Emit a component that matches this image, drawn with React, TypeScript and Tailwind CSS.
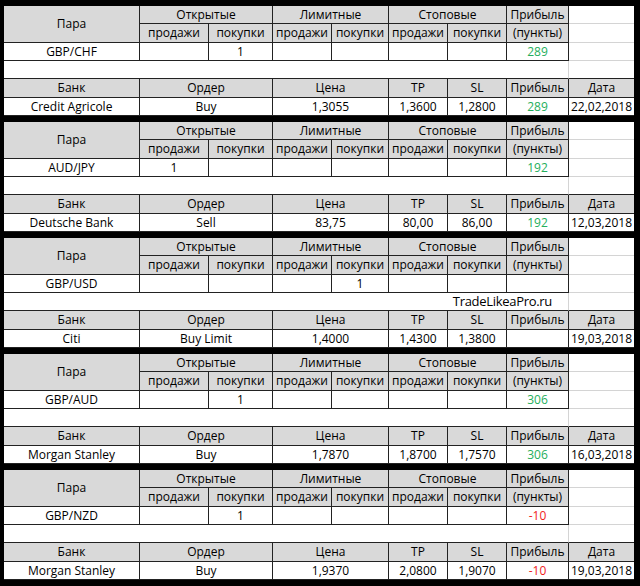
import type { ReactNode } from 'react'

type Block = {
  pair: string
  open: [string, string]
  limit: [string, string]
  stop: [string, string]
  profit: string
  bank: string
  order: string
  price: string
  tp: string
  sl: string
  date: string
  loss?: boolean
  mark?: boolean
}

const blocks: Block[] = [
  {
    pair: 'GBP/CHF',
    open: ['', '1'],
    limit: ['', ''],
    stop: ['', ''],
    profit: '289',
    bank: 'Credit Agricole',
    order: 'Buy',
    price: '1,3055',
    tp: '1,3600',
    sl: '1,2800',
    date: '22,02,2018',
  },
  {
    pair: 'AUD/JPY',
    open: ['1', ''],
    limit: ['', ''],
    stop: ['', ''],
    profit: '192',
    bank: 'Deutsche Bank',
    order: 'Sell',
    price: '83,75',
    tp: '80,00',
    sl: '86,00',
    date: '12,03,2018',
  },
  {
    pair: 'GBP/USD',
    open: ['', ''],
    limit: ['', '1'],
    stop: ['', ''],
    profit: '',
    bank: 'Citi',
    order: 'Buy Limit',
    price: '1,4000',
    tp: '1,4300',
    sl: '1,3800',
    date: '19,03,2018',
    mark: true,
  },
  {
    pair: 'GBP/AUD',
    open: ['', '1'],
    limit: ['', ''],
    stop: ['', ''],
    profit: '306',
    bank: 'Morgan Stanley',
    order: 'Buy',
    price: '1,7870',
    tp: '1,8700',
    sl: '1,7570',
    date: '16,03,2018',
  },
  {
    pair: 'GBP/NZD',
    open: ['', '1'],
    limit: ['', ''],
    stop: ['', ''],
    profit: '-10',
    bank: 'Morgan Stanley',
    order: 'Buy',
    price: '1,9370',
    tp: '2,0800',
    sl: '1,9070',
    date: '19,03,2018',
    loss: true,
  },
]

const Cell = ({
  children,
  className = '',
  head = false,
}: {
  children?: ReactNode
  className?: string
  head?: boolean
}) => (
  <div
    className={`flex items-center justify-center border-r border-b border-[#222] whitespace-nowrap ${
      head ? 'bg-[#d9d9d9]' : 'bg-white'
    } ${className}`}
  >
    {children}
  </div>
)

// empty excel cell to the right of the pair table
const Grid = () => (
  <div className="border-b border-[#d4d4d4] bg-white" />
)

const Table = ({ b }: { b: Block }) => {
  const profitColor = b.loss ? 'text-[#f01c1c]' : 'text-[#25ae5c]'

  return (
    <div className="grid grid-cols-[136px_69px_64px_59px_57px_59px_59px_62px_65px] grid-rows-[18px_19px_18px_18px_19px_18px]">
      <Cell head className="row-span-2">
        Пара
      </Cell>
      <Cell head className="col-span-2">
        Открытые
      </Cell>
      <Cell head className="col-span-2">
        Лимитные
      </Cell>
      <Cell head className="col-span-2">
        Стоповые
      </Cell>
      <Cell head>Прибыль</Cell>
      <Grid />

      <Cell head>продажи</Cell>
      <Cell head>покупки</Cell>
      <Cell head>продажи</Cell>
      <Cell head>покупки</Cell>
      <Cell head>продажи</Cell>
      <Cell head>покупки</Cell>
      <Cell head>(пункты)</Cell>
      <Grid />

      <Cell>{b.pair}</Cell>
      <Cell>{b.open[0]}</Cell>
      <Cell>{b.open[1]}</Cell>
      <Cell>{b.limit[0]}</Cell>
      <Cell>{b.limit[1]}</Cell>
      <Cell>{b.stop[0]}</Cell>
      <Cell>{b.stop[1]}</Cell>
      <Cell className={profitColor}>{b.profit}</Cell>
      <Grid />

      <div className="col-span-8 flex items-center justify-end border-r border-b border-r-[#d4d4d4] border-b-[#222] bg-white pr-[16px]">
        {b.mark && (
          <span className="text-[13px] tracking-[-0.3px]">TradeLikeaPro.ru</span>
        )}
      </div>
      <div className="border-b border-[#222] bg-white" />

      <Cell head>Банк</Cell>
      <Cell head className="col-span-2">
        Ордер
      </Cell>
      <Cell head className="col-span-2">
        Цена
      </Cell>
      <Cell head>TP</Cell>
      <Cell head>SL</Cell>
      <Cell head>Прибыль</Cell>
      <Cell head className="border-r-0">
        Дата
      </Cell>

      <Cell>{b.bank}</Cell>
      <Cell className="col-span-2">{b.order}</Cell>
      <Cell className="col-span-2">{b.price}</Cell>
      <Cell>{b.tp}</Cell>
      <Cell>{b.sl}</Cell>
      <Cell className={profitColor}>{b.profit}</Cell>
      <Cell className="border-r-0">{b.date}</Cell>
    </div>
  )
}

const App = () => {
  return (
    <div
      className="flex h-[586px] w-[640px] flex-col gap-[6px] bg-black pt-[6px] pr-[6px] pl-[4px] text-[12px] leading-none text-black"
      style={{ fontFamily: '"Open Sans", "Noto Sans", sans-serif' }}
    >
      {blocks.map((b) => (
        <Table key={b.pair + b.date} b={b} />
      ))}
    </div>
  )
}

export default App
